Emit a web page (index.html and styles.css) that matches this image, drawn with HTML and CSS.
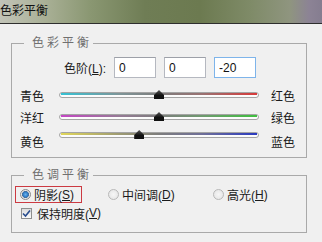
FILE: index.html
```html
<!DOCTYPE html>
<html lang="zh-CN">
<head>
  <meta charset="UTF-8">
  <title>色彩平衡</title>
  <link rel="stylesheet" href="styles.css">
</head>
<body>
  <div class="titlebar">色彩平衡</div>

  <fieldset class="group balance">
    <legend>色彩平衡</legend>
    <div class="levels">
      <span class="levels-label">色阶(<u>L</u>):</span>
      <input class="level" type="text" value="0">
      <input class="level" type="text" value="0">
      <input class="level focus" type="text" value="-20">
    </div>
    <div class="slider-row">
      <span class="side-left">青色</span>
      <div class="track cyan-red"><span class="thumb" style="left: 50%"></span></div>
      <span class="side-right">红色</span>
    </div>
    <div class="slider-row">
      <span class="side-left">洋红</span>
      <div class="track magenta-green"><span class="thumb" style="left: 50%"></span></div>
      <span class="side-right">绿色</span>
    </div>
    <div class="slider-row last">
      <span class="side-left">黄色</span>
      <div class="track yellow-blue"><span class="thumb" style="left: 40%"></span></div>
      <span class="side-right">蓝色</span>
    </div>
  </fieldset>

  <fieldset class="group tone">
    <legend>色调平衡</legend>
    <div class="radio-row">
      <label class="option selected-box">
        <span class="radio checked"></span>阴影(<u>S</u>)
      </label>
      <label class="option mid">
        <span class="radio"></span>中间调(<u>D</u>)
      </label>
      <label class="option">
        <span class="radio"></span>高光(<u>H</u>)
      </label>
    </div>
    <label class="check-row">
      <span class="checkbox">
        <svg width="9" height="9" viewBox="0 0 9 9"><path d="M1 4.5 L3.5 7 L8 1.5" fill="none" stroke="#284c8e" stroke-width="1.6"/></svg>
      </span>保持明度(<u>V</u>)
    </label>
  </fieldset>
</body>
</html>
```

FILE: styles.css
```css
body {
  margin: 0;
  background-color: #f0f0f0;
  color: #1b1b1b;
  font-family: "Liberation Sans", "Noto Sans CJK SC", sans-serif;
  font-size: 12px;
}

u {
  text-decoration: underline;
  text-underline-offset: 1px;
}

.titlebar {
  height: 23px;
  line-height: 22px;
  border-bottom: 1px solid #2e2e2e;
  color: #111;
  background: linear-gradient(90deg, #c2c4b8 0%, #a9b096 14%, #8a9772 28%, #6f7d55 45%, #6c7a50 62%, #7f8b68 78%, #8f957f 90%, #8c8395 96%, #857d90 100%);
}

.group {
  margin: 0 0 0 11px;
  width: 296px;
  box-sizing: border-box;
  border: 1px solid #a9a9a9;
  padding: 0;
}

.group legend {
  margin-left: 12px;
  padding: 0 1px 0 8px;
  line-height: 16px;
  letter-spacing: 3px;
  color: #707070;
}

.balance {
  margin-top: 11px;
  padding-bottom: 5px;
}

.levels {
  display: flex;
  align-items: center;
  gap: 8px;
  margin-top: 6px;
}

.levels-label {
  width: 94px;
  text-align: right;
}

.level {
  width: 42px;
  height: 21px;
  box-sizing: border-box;
  margin: 0;
  padding: 0 4px;
  border: 1px solid #b5b8c0;
  border-top-color: #9da0a8;
  background: #fff;
  font-family: "Liberation Sans", sans-serif;
  font-size: 12px;
  color: #111;
}

.level.focus {
  border-color: #7eb4ea;
}

.slider-row {
  display: flex;
  align-items: center;
  height: 22px;
  padding-left: 8px;
}

.slider-row:nth-of-type(2) {
  margin-top: 6px;
}

.slider-row.last {
  margin-top: 2px;
}

.side-left {
  width: 39px;
}

.side-right {
  margin-left: 12px;
}

.track {
  position: relative;
  width: 200px;
  height: 6px;
  box-sizing: border-box;
  border: 1px solid #a4a4a4;
  border-radius: 3px;
  background: #fcfcfc;
}

.track::before {
  content: "";
  position: absolute;
  left: 1px;
  right: 1px;
  top: 0;
  height: 2px;
  background: var(--line);
}

.cyan-red {
  --line: linear-gradient(90deg, #35c2d4 0%, #7f9598 30%, #7d7d7d 50%, #9a7272 72%, #d83a3a 100%);
}

.magenta-green {
  --line: linear-gradient(90deg, #c447c4 0%, #957a95 30%, #7d7d7d 50%, #6f9a6f 72%, #3fbf3f 100%);
}

.yellow-blue {
  --line: linear-gradient(90deg, #e0d65a 0%, #9d9a72 30%, #7d7d7d 50%, #6f6f98 72%, #2a3ac0 100%);
}

.slider-row.last .track {
  margin-bottom: 12px;
}

.thumb {
  position: absolute;
  top: -3px;
  width: 10px;
  height: 9px;
  margin-left: -5px;
  background: linear-gradient(#555, #111 60%);
  clip-path: polygon(50% 0, 100% 55%, 100% 100%, 0 100%, 0 55%);
}

.tone {
  margin-top: 9px;
  padding-bottom: 11px;
}

.radio-row {
  display: flex;
  align-items: center;
  margin-top: 3px;
  padding-left: 3px;
}

.option {
  display: flex;
  align-items: center;
  height: 17px;
}

.selected-box {
  box-sizing: border-box;
  width: 67px;
  padding-left: 4px;
  border: 1px solid #cc3a42;
  margin-right: 26px;
}

.option.mid {
  width: 105px;
}

.radio {
  width: 11px;
  height: 11px;
  box-sizing: border-box;
  margin-right: 3px;
  border: 1px solid #b8b8b8;
  border-radius: 50%;
  background: radial-gradient(circle, #f6f6f6 0, #e2e2e2 100%);
}

.radio.checked {
  border-color: #8a8a8a;
  background: radial-gradient(circle, #6cb3ec 0, #2a78c4 2.6px, #4a6f99 3.2px, #e9e9e9 3.8px, #d4d4d4 100%);
}

.check-row {
  display: flex;
  align-items: center;
  height: 16px;
  margin-top: 2px;
  padding-left: 9px;
}

.checkbox {
  display: flex;
  align-items: center;
  justify-content: center;
  width: 11px;
  height: 11px;
  box-sizing: border-box;
  margin-right: 5px;
  border: 1px solid #8e8f8f;
  background: linear-gradient(#dcdcdc, #fbfbfb);
}
```
